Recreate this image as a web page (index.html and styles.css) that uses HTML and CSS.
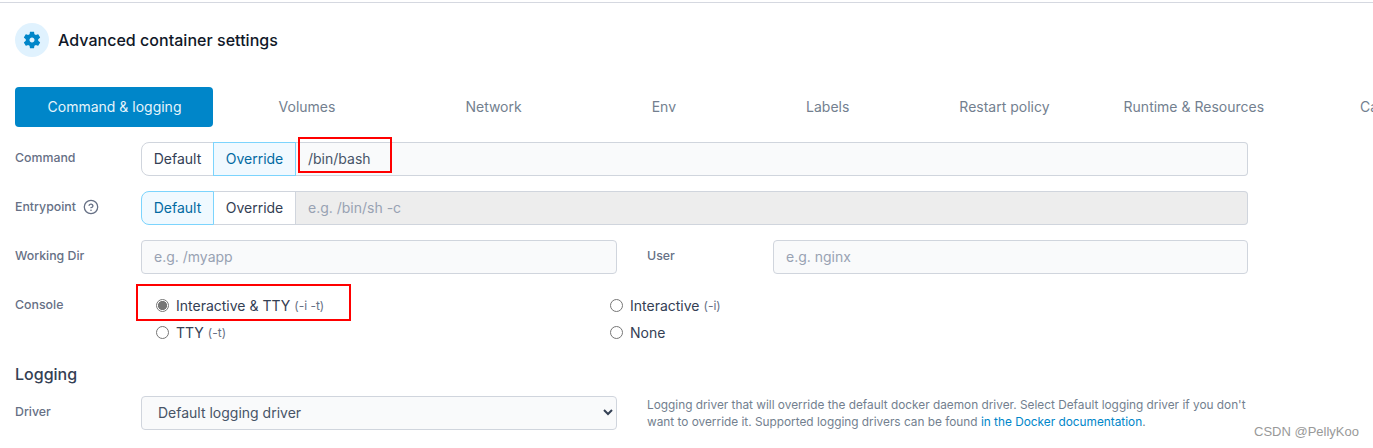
FILE: index.html
```
<!DOCTYPE html>
<html lang="en">
<head>
<meta charset="utf-8">
<title>Advanced container settings</title>
<link rel="stylesheet" href="styles.css">
</head>
<body>
<div class="topline"></div>
<main class="page">
  <header class="head">
    <span class="head-icon">
      <svg viewBox="0 0 24 24" width="20" height="20"><path fill="#0086c9" fill-rule="evenodd" d="M19.43 12.98c.04-.32.07-.64.07-.98s-.03-.66-.07-.98l2.11-1.65c.19-.15.24-.42.12-.64l-2-3.46c-.12-.22-.39-.3-.61-.22l-2.49 1c-.52-.4-1.08-.73-1.69-.98l-.38-2.65C14.46 2.18 14.25 2 14 2h-4c-.25 0-.46.18-.49.42l-.38 2.65c-.61.25-1.17.59-1.69.98l-2.49-1c-.23-.09-.49 0-.61.22l-2 3.46c-.13.22-.07.49.12.64l2.11 1.65c-.04.32-.07.65-.07.98s.03.66.07.98l-2.11 1.65c-.19.15-.24.42-.12.64l2 3.46c.12.22.39.3.61.22l2.49-1c.52.4 1.08.73 1.69.98l.38 2.65c.03.24.24.42.49.42h4c.25 0 .46-.18.49-.42l.38-2.65c.61-.25 1.17-.59 1.69-.98l2.49 1c.23.09.49 0 .61-.22l2-3.46c.12-.22.07-.49-.12-.64l-2.11-1.65zM12 15c-1.65 0-3-1.35-3-3s1.35-3 3-3 3 1.35 3 3-1.35 3-3 3z"/></svg>
    </span>
    <h1 class="title">Advanced container settings</h1>
  </header>

  <nav class="tabs">
    <a class="tab tab-active">Command &amp; logging</a>
    <a class="tab">Volumes</a>
    <a class="tab">Network</a>
    <a class="tab">Env</a>
    <a class="tab">Labels</a>
    <a class="tab tab-restart">Restart policy</a>
    <a class="tab tab-runtime">Runtime &amp; Resources</a>
    <a class="tab tab-caps">Capabilities</a>
  </nav>

  <div class="row">
    <label class="label">Command</label>
    <div class="field">
      <div class="toggle">
        <span class="opt">Default</span>
        <span class="opt opt-on">Override</span>
      </div>
      <div class="input input-join input-value">/bin/bash</div>
    </div>
  </div>

  <div class="row">
    <label class="label">Entrypoint
      <svg class="help" viewBox="0 0 16 16" width="16" height="16"><circle cx="8" cy="8" r="6.7" fill="none" stroke="#667085" stroke-width="1.3"/><path d="M6.1 6.3a2 2 0 0 1 3.85.6c0 1.3-1.95 1.7-1.95 1.7" fill="none" stroke="#667085" stroke-width="1.3" stroke-linecap="round"/><circle cx="8" cy="11.2" r=".8" fill="#667085"/></svg>
    </label>
    <div class="field">
      <div class="toggle">
        <span class="opt opt-on">Default</span>
        <span class="opt">Override</span>
      </div>
      <div class="input input-join input-disabled">e.g. /bin/sh -c</div>
    </div>
  </div>

  <div class="row">
    <label class="label">Working Dir</label>
    <div class="field split">
      <div class="input half">e.g. /myapp</div>
      <label class="label label-user">User</label>
      <div class="input half">e.g. nginx</div>
    </div>
  </div>

  <div class="row row-console">
    <label class="label">Console</label>
    <div class="radios">
      <div class="radio"><span class="dot dot-on"></span>Interactive &amp; TTY <small>(-i -t)</small></div>
      <div class="radio"><span class="dot"></span>Interactive <small>(-i)</small></div>
      <div class="radio"><span class="dot"></span>TTY <small>(-t)</small></div>
      <div class="radio"><span class="dot"></span>None</div>
    </div>
  </div>

  <h2 class="section">Logging</h2>

  <div class="row">
    <label class="label">Driver</label>
    <div class="field split">
      <div class="input half select">Default logging driver
        <svg viewBox="0 0 12 12" width="12" height="12"><path d="M2 4l4 4 4-4" fill="none" stroke="#344054" stroke-width="2"/></svg>
      </div>
      <p class="note">Logging driver that will override the default docker daemon driver. Select Default logging driver if you don't want to override it. Supported logging drivers can be found <a class="link">in the Docker documentation</a>.</p>
    </div>
  </div>
</main>
<div class="mark mark-a"></div>
<div class="mark mark-b"></div>
<div class="watermark">CSDN @PellyKoo</div>
</body>
</html>
```
FILE: styles.css
```
* { box-sizing: border-box; }
html, body { margin: 0; height: 448px; overflow: hidden; background: #fff; }
body { position: relative; font-family: Inter, "Liberation Sans", sans-serif; color: #344054; font-size: 14px; }
.topline { height: 3px; background: #fff; border-bottom: 1px solid #d5d8e0; }
.page { padding: 20px 0 0 15px; width: 1373px; overflow: hidden; }
.head { display: flex; align-items: center; gap: 9px; height: 34px; }
.head-icon { width: 34px; height: 34px; border-radius: 50%; background: #e0f2fe; display: flex; align-items: center; justify-content: center; }
.title { margin: 0; font-size: 16px; font-weight: 500; letter-spacing: .03px; color: #101828; }
.tabs { display: flex; margin-top: 30px; height: 40px; white-space: nowrap; }
.tab { flex: none; display: flex; align-items: center; padding: 0 65px 2px; color: #737f8f; font-size: 14px; }
.tab-active { width: 198px; padding: 0 0 2px 1px; justify-content: center; background: #0086c9; color: #e6f4fb; border-radius: 4px; }
.tab-active + .tab { margin-left: .6px; }
.tab-restart { padding-left: 45px; padding-right: 37px; }
.tab-runtime { padding-left: 37px; padding-right: 48px; }
.tab-caps { padding-left: 48px; }
.row { display: flex; width: 1233px; margin-top: 15px; height: 34px; }
.label { flex: none; width: 126px; font-size: 12.35px; font-weight: 500; color: #667085; line-height: 32px; display: flex; align-items: flex-start; gap: 7px; }
.help { margin-top: 8px; }
.field { flex: 1; display: flex; min-width: 0; }
.toggle { display: flex; flex: none; width: 155px; }
.opt { position: relative; height: 34px; padding-bottom: 2px; display: flex; align-items: center; justify-content: center; border: 1px solid #d0d5dd; background: #fff; color: #344054; }
.opt:first-child { width: 73px; border-radius: 8px 0 0 8px; }
.opt:last-child { width: 83px; margin-left: -1px; }
.opt-on { z-index: 1; background: #f0f9ff; border-color: #7cd4fd; color: #026aa2; }
.input { height: 34px; padding: 0 12px 2px; border: 1px solid #d0d5dd; border-radius: 4px; background: #f9fafb; color: #98a2b3; display: flex; align-items: center; }
.input-join { flex: 1; border-left: 0; border-radius: 0 4px 4px 0; }
.input-value { color: #475467; }
.input-disabled { background: #ededed; color: #98a2b3; }
.split { justify-content: flex-start; }
.half { flex: none; width: 476px; }
.label-user { width: 156px; padding-left: 30px; }
.half:last-child { width: 475px; }
.row-console { height: auto; margin-top: 15px; }
.radios { flex: none; display: grid; grid-template-columns: 454px 1fr; grid-auto-rows: 27px; padding: 3px 0 0 15px; width: 1000px; }
.radio { display: flex; align-items: center; gap: 4px; color: #344054; }
.radio small { font-size: 12px; color: #667085; }
.dot { width: 13px; height: 13px; border: 1px solid #767676; border-radius: 50%; margin-right: 3px; background: #fff; flex: none; }
.dot-on { background: radial-gradient(circle, #767676 0 4.3px, #fff 4.8px); }
.section { margin: 18px 0 0; font-size: 16px; font-weight: 500; line-height: 20px; color: #344054; }
.section + .row { margin-top: 12px; }
.select { justify-content: space-between; padding: 0 2px 2px 16px; color: #475467; }
.note { flex: 1; margin: 0; padding: 1px 0 0 30px; font-size: 11.84px; line-height: 17px; color: #737f8f; }
.link { color: #0086c9; }
.mark { position: absolute; border: 2px solid #f00; }
.mark-a { left: 298px; top: 137px; width: 94px; height: 36px; }
.mark-b { left: 136px; top: 284px; width: 215px; height: 37px; }
.watermark { position: absolute; right: 14px; top: 424px; font-size: 13px; font-family: "Liberation Sans", sans-serif; color: #999; }
```
